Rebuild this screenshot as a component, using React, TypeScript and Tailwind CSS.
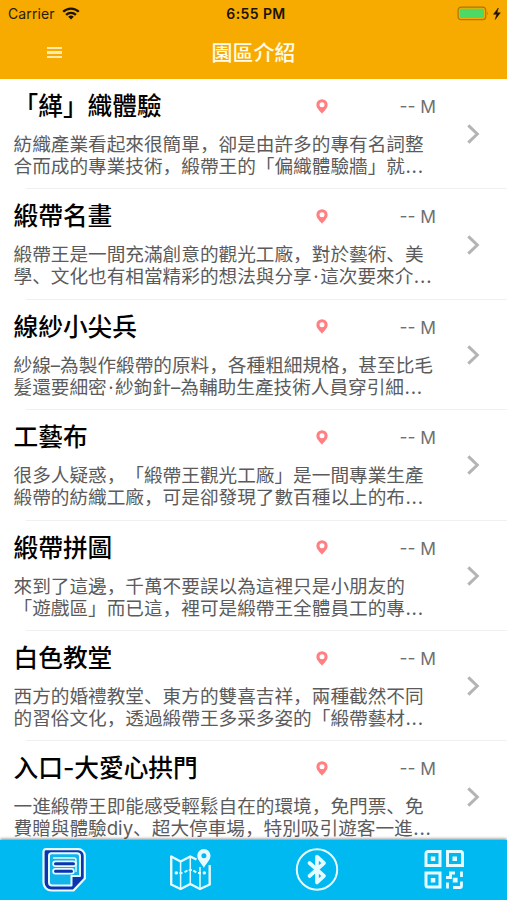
import type { ReactNode } from 'react'

type Place = {
  title: string
  lines: [string, string]
}

const places: Place[] = [
  {
    title: '「緙」織體驗',
    lines: ['紡織產業看起來很簡單，卻是由許多的專有名詞整', '合而成的專業技術，緞帶王的「偏織體驗牆」就…'],
  },
  {
    title: '緞帶名畫',
    lines: ['緞帶王是一間充滿創意的觀光工廠，對於藝術、美', '學、文化也有相當精彩的想法與分享·這次要來介…'],
  },
  {
    title: '線紗小尖兵',
    lines: ['紗線–為製作緞帶的原料，各種粗細規格，甚至比毛', '髮還要細密·紗鉤針–為輔助生產技術人員穿引細…'],
  },
  {
    title: '工藝布',
    lines: ['很多人疑惑，「緞帶王觀光工廠」是一間專業生產', '緞帶的紡織工廠，可是卻發現了數百種以上的布…'],
  },
  {
    title: '緞帶拼圖',
    lines: ['來到了這邊，千萬不要誤以為這裡只是小朋友的', '「遊戲區」而已這，裡可是緞帶王全體員工的專…'],
  },
  {
    title: '白色教堂',
    lines: ['西方的婚禮教堂、東方的雙喜吉祥，兩種截然不同', '的習俗文化，透過緞帶王多采多姿的「緞帶藝材…'],
  },
  {
    title: '入口-大愛心拱門',
    lines: ['一進緞帶王即能感受輕鬆自在的環境，免門票、免', '費贈與體驗diy、超大停車場，特別吸引遊客一進…'],
  },
]

function StatusBar() {
  return (
    <div className="grid h-[27px] grid-cols-3 items-center text-[14px] text-[#2a1c00]">
      <div className="flex items-center gap-[7px] pl-2">
        <span className="tracking-[0.1px]">Carrier</span>
        <svg className="h-[13px] w-[18px]" viewBox="0 0 18 13" fill="none" stroke="#1c1300" strokeWidth="2.3">
          <path d="M1.2 4.8a11 11 0 0 1 15.6 0" />
          <path d="M4.1 7.9a6.9 6.9 0 0 1 9.8 0" />
          <path d="M9 12.5 6.2 9.8a4 4 0 0 1 5.6 0z" fill="#1c1300" stroke="none" />
        </svg>
      </div>
      <div className="pl-[5px] text-center font-semibold tracking-[0.4px] whitespace-nowrap text-[#1c1300]">6:55 PM</div>
      <div className="flex items-center justify-end pr-[5px]">
        <svg className="h-[15px] w-[45px]" viewBox="0 0 45 15">
          <rect x="1.1" y="1.1" width="27.6" height="12.6" rx="3" fill="none" stroke="#a97800" strokeWidth="1.2" />
          <rect x="2.8" y="2.8" width="24.2" height="9.2" rx="1.4" fill="#4cd964" />
          <path d="M30.2 5.5q1.6 1.9 0 3.8z" fill="#a97800" />
          <path d="M41.3 2 36.5 8.3h3.2l-1.5 5.2 5.1-6.7h-3.3z" fill="#1c1300" stroke="#1c1300" strokeWidth=".5" />
        </svg>
      </div>
    </div>
  )
}

function Header() {
  return (
    <header className="h-[79px] shrink-0 bg-[#f7ab00]">
      <StatusBar />
      <div className="grid h-[52px] grid-cols-[109px_minmax(0,1fr)_109px] items-center">
        <button type="button" aria-label="選單" className="flex flex-col items-center gap-[2px] pb-px">
          <span className="h-[2.5px] w-[15px] bg-[#ffeab0]" />
          <span className="h-[2.5px] w-[15px] bg-[#ffeab0]" />
          <span className="h-[2.5px] w-[15px] bg-[#ffeab0]" />
        </button>
        <h1 className="pb-px text-center text-[21px] leading-none font-medium text-[#fffbe8]">園區介紹</h1>
      </div>
    </header>
  )
}

// The Latin middle dot and ellipsis are set looser than the glyphs themselves.
function Line({ text }: { text: string }) {
  return (
    <span className="block">
      {text.split(/([·…])/).map((part, i) => {
        if (part === '·') {
          return (
            <span key={i} className="px-[1.5px]">
              ·
            </span>
          )
        }
        if (part === '…') {
          return (
            <span key={i} className="pl-[0.5px] tracking-[0.8px]">
              ...
            </span>
          )
        }
        return part
      })}
    </span>
  )
}

function PlaceRow({ title, lines }: Place) {
  return (
    <li className="flex h-[110.4px] shrink-0 flex-col">
      <div className="flex min-h-0 flex-1">
        <div className="w-[440px] pt-[12.1px] pl-[13.5px]">
          <div className="flex h-[30px] items-center">
            <h2 className="w-[302px] text-[24.7px] leading-[30px] font-medium whitespace-nowrap text-black">{title}</h2>
            <svg className="h-[15px] w-[12px]" viewBox="0 0 12 15" fill="#ff7f82">
              <path
                fillRule="evenodd"
                d="M6 .2a5.6 5.6 0 0 0-5.6 5.6C.4 9.2 3.5 11.6 6 14.8c2.5-3.2 5.6-5.6 5.6-9A5.6 5.6 0 0 0 6 .2zm0 3a2.5 2.5 0 1 1 0 5 2.5 2.5 0 0 1 0-5z"
              />
            </svg>
            <span className="flex-1 pt-[2px] pr-[4px] text-right text-[17.4px] whitespace-nowrap text-[#707070]">-- M</span>
          </div>
          <p className="mt-[12px] text-[18.65px] leading-[22px] whitespace-nowrap text-[#5b5b5b] [text-spacing-trim:space-all]">
            <Line text={lines[0]} />
            <Line text={lines[1]} />
          </p>
        </div>
        <div className="flex flex-1 items-center pt-px pl-[26px]">
          <svg className="h-[20px] w-[14px]" viewBox="0 0 14 20" fill="none" stroke="#b4b4b6" strokeWidth="3">
            <path d="M2.3 1.3 11.3 10l-9 8.7" />
          </svg>
        </div>
      </div>
      <div className="ml-[26px] h-px shrink-0 bg-[#f0f0f0]" />
    </li>
  )
}

function NotesIcon() {
  return (
    <svg className="ml-[2px] h-[44px] w-[44px]" viewBox="0 0 44 44" fill="none" strokeLinejoin="round" strokeLinecap="round">
      <path
        d="M4 1.2h32a6.5 6.5 0 0 1 6.8 6.5V30.5L31.5 42.5H9.5a8 8 0 0 1-8-8V3.7Q1.5 1.2 4 1.2z"
        fill="#0b35ae"
        stroke="#e6fbff"
        strokeWidth="2.2"
      />
      <path
        d="M9.5 5.200h25.5a3 3 0 0 1 3 3V28H29.500v9.500H10a3 3 0 0 1-3-3V7.700Q7 5.200 9.500 5.200z"
        fill="#12b4ec"
        stroke="#e6fbff"
        strokeWidth="2"
      />
      <path d="M11.5 10H32q2 0 2 2v11.500" stroke="#e6fbff" strokeWidth="1.4" />
      <path d="M13.5 15.700h18M13.500 23.200h16" stroke="#e6fbff" strokeWidth="6.4" />
      <path d="M13.5 15.700h18M13.500 23.200h16" stroke="#0b35ae" strokeWidth="3" />
    </svg>
  )
}

function MapIcon() {
  return (
    <svg className="h-[42px] w-[42px]" viewBox="0 0 42 42" fill="none" stroke="#e6fbff" strokeWidth="2.4" strokeLinejoin="round">
      <path d="M27.5 10.5 21.3 7.5 11.6 12.5 2.2 7.5V35.5L11.6 40l9.7-5 9.7 5 9.7-4.5V16" />
      <path d="M11.6 12.5V39M21.3 8v27M31 18v22" strokeWidth="1.5" />
      <path d="M10.5 24h3M15.5 23.200l3-1.700M19.800 21h3M24.300 21.600l3 1.800M29 24h3" strokeWidth="2" />
      <circle cx="7.3" cy="23.9" r="1.7" fill="#e6fbff" stroke="none" />
      <circle cx="35.3" cy="23.9" r="1.7" fill="#e6fbff" stroke="none" />
      <path
        d="M34.9 0A6.6 6.6 0 0 0 28.3 6.700c0 4.500 4.300 7.500 6.600 12.300 2.300-4.800 6.600-7.800 6.600-12.300A6.600 6.600 0 0 0 34.900 0zm0 4.200a2.500 2.500 0 1 1 0 5 2.500 2.500 0 0 1 0-5z"
        fill="#e6fbff"
        fillRule="evenodd"
        stroke="none"
      />
    </svg>
  )
}

function BluetoothIcon() {
  return (
    <svg className="h-[44px] w-[44px]" viewBox="0 0 44 44" fill="none" stroke="#e6fbff">
      <circle cx="22" cy="21.5" r="20.200" strokeWidth="2" />
      <path d="M14.5 15 29 27.800 22 34.500V8.500l7 6.700L14.500 28" strokeWidth="3.7" strokeLinejoin="round" strokeLinecap="round" />
    </svg>
  )
}

function QrIcon() {
  return (
    <svg className="h-[40px] w-[40px]" viewBox="0 0 40 40" fill="none" stroke="#e6fbff" strokeWidth="3">
      <path d="M4 1.5h12v14H2V3.5a2 2 0 0 1 2-2zM23.5 1.500h13a2 2 0 0 1 2 2v12h-15zM2 23h14v14H4a2 2 0 0 1-2-2z" />
      <path d="M22 27.5h4.500V23H31M37.500 21.500V27M23.500 32.500v6M29 37.500h7a1.500 1.500 0 0 0 1.500-1.500v-4.500" strokeWidth="2.8" />
      <path d="M6.8 6.500h4.500V11H6.800zM28.500 6.500H33V11h-4.500zM6.800 28h4.500v4.500H6.800zM28.800 27.800h4.800v4.800h-4.800z" fill="#e6fbff" stroke="none" />
    </svg>
  )
}

function Tab({ label, children }: { label: string; children: ReactNode }) {
  return (
    <button type="button" aria-label={label} className="flex items-center justify-center">
      {children}
    </button>
  )
}

export default function App() {
  return (
    <div className="flex h-[900px] w-[507px] flex-col overflow-hidden bg-white font-[Inter,'Noto_Sans_CJK_SC',sans-serif]">
      <Header />
      <main className="min-h-0 flex-1 overflow-hidden">
        <ul className="flex flex-col">
          {places.map((place) => (
            <PlaceRow key={place.title} {...place} />
          ))}
        </ul>
      </main>
      <nav className="relative grid h-[60px] shrink-0 grid-cols-4 bg-[#00b9f1] shadow-[0_-1px_3px_rgba(0,0,0,0.5)]">
        <Tab label="介紹">
          <NotesIcon />
        </Tab>
        <Tab label="地圖">
          <MapIcon />
        </Tab>
        <Tab label="藍牙">
          <BluetoothIcon />
        </Tab>
        <Tab label="掃描">
          <QrIcon />
        </Tab>
      </nav>
    </div>
  )
}
